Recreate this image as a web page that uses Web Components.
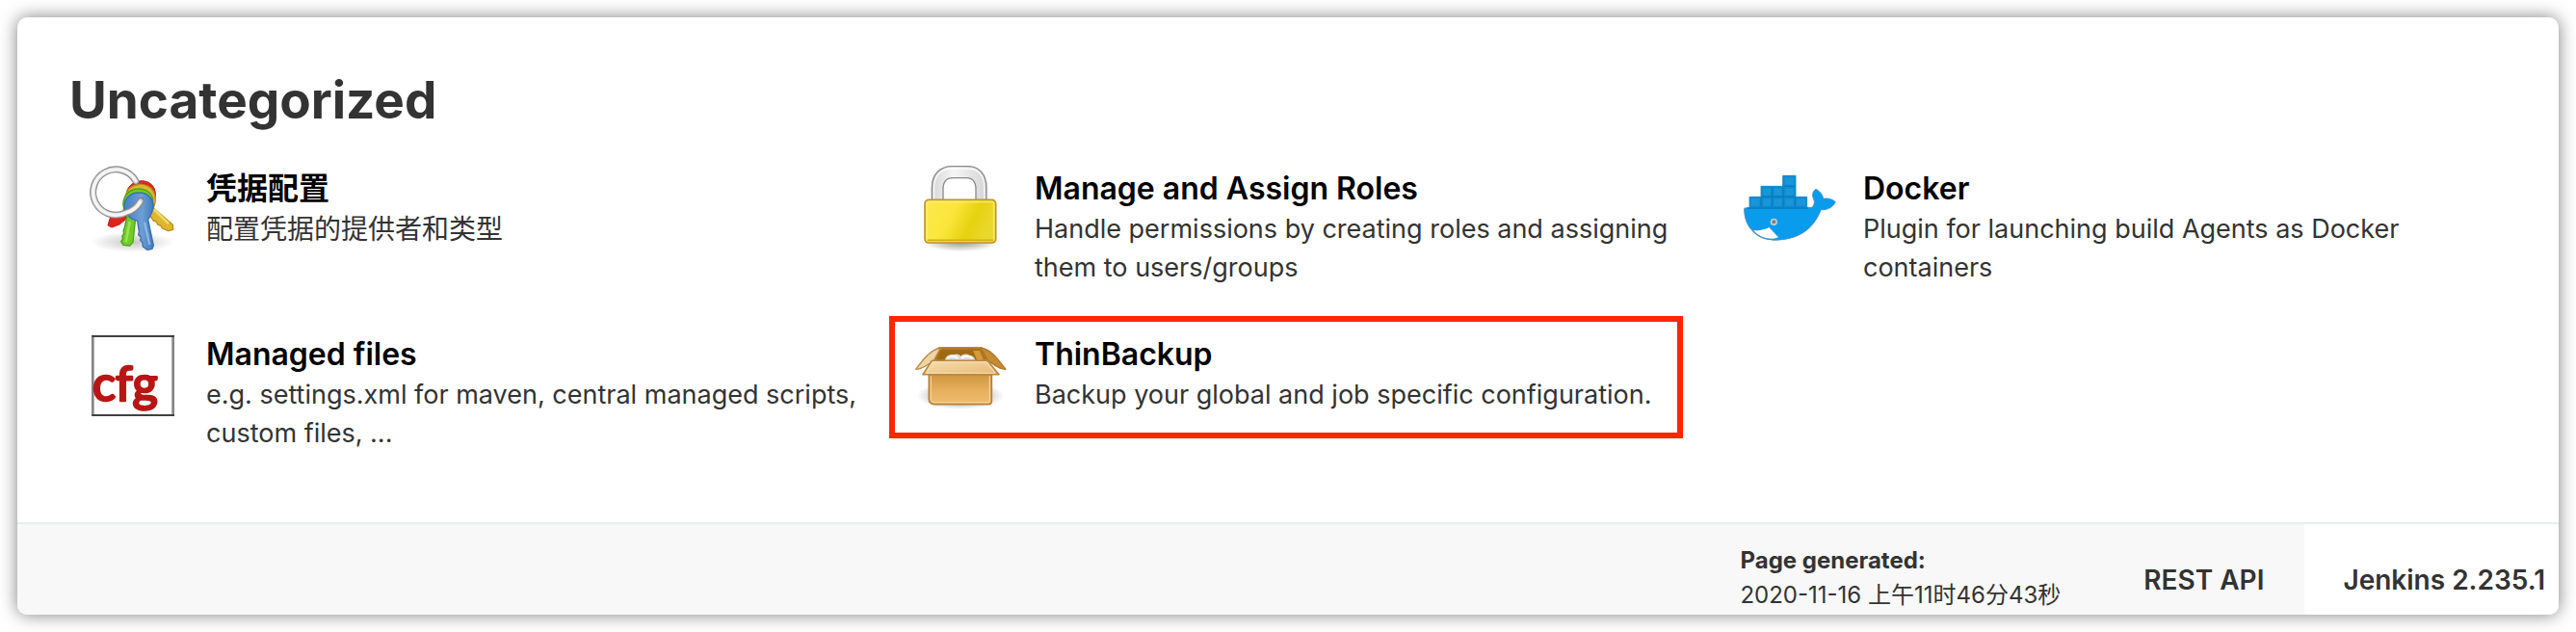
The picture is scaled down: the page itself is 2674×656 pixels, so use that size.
<!DOCTYPE html>
<html lang="zh-CN">
<head>
<meta charset="utf-8">
<title>Manage Jenkins</title>
<style>
  body { margin: 0; padding: 18px; background: #fff; color: #333;
    font-family: Inter, "Noto Sans CJK SC", sans-serif; }
</style>
</head>
<body>
<jenkins-window>
  <manage-section heading="Uncategorized">
    <manage-item href="#credentials" label="凭据配置" lang="zh">
      <svg slot="icon" viewBox="30 18 288 288" aria-hidden="true">
        <defs>
          <radialGradient id="ks"><stop offset="0" stop-color="#000" stop-opacity=".22"/><stop offset="1" stop-color="#000" stop-opacity="0"/></radialGradient>
          <linearGradient id="kb" x1="0" x2="1"><stop offset="0" stop-color="#4580c4"/><stop offset=".6" stop-color="#6d9fd4"/><stop offset="1" stop-color="#4079bd"/></linearGradient>
        </defs>
        <ellipse cx="172" cy="274" rx="130" ry="32" fill="url(#ks)"/>
        <path d="M172 120l-35 68-35 12-6 22 12 6 24-9 44-36z" fill="#e0251d" stroke="#c11a14" stroke-width="3"/>
        <path d="M155 116c12-38 66-44 84-12 10 20 4 40-2 52l-30 8z" fill="#d62b25" stroke="#bd1c1c" stroke-width="3"/>
        <path d="M150 130c12-44 70-46 88-14 10 20 6 38 0 52l60 52 1 15-15 4-19-8-5-9-8-2-5-10-9-3-28-40z" fill="#e0b62c" stroke="#b98f1a" stroke-width="4" stroke-linejoin="round"/>
        <path d="M239 172l46 44" stroke="#edda6a" stroke-width="8"/>
        <path d="M146 170c-10-34 14-62 46-62 26 0 42 16 44 34l-54 58-8 74-10 11-20-2-7-11 6-8-3-8 6-9-2-8 4-10 8-38z" fill="#72cc28" stroke="#4ea31c" stroke-width="4" stroke-linejoin="round"/>
        <path d="M164 210l-12 64" stroke="#9ae44e" stroke-width="8"/>
        <path d="M149 174c-8-32 14-54 44-54 30 0 48 24 44 48-3 18-12 28-16 36l17 80-4 11-15 3-14-10-1-12-7-8 2-9-8-8 2-9-5-34c-24-6-34-18-39-34z" fill="url(#kb)" stroke="#3d6faf" stroke-width="4" stroke-linejoin="round"/>
        <path d="M210 212l16 70" stroke="#8ab7e4" stroke-width="7"/>
        <circle cx="199" cy="144" r="9" fill="#4d5964"/>
        <path d="M183 84A71 71 0 1 0 153 182Q183 174 198 146" fill="none" stroke="#858585" stroke-width="21" stroke-linecap="round"/>
        <path d="M183 84A71 71 0 1 0 153 182Q183 174 198 146" fill="none" stroke="#c9c9c9" stroke-width="15" stroke-linecap="round"/>
        <path d="M183 84A71 71 0 1 0 153 182Q183 174 196 149" fill="none" stroke="#f5f5f5" stroke-width="10" stroke-linecap="round"/>
      </svg>
      配置凭据的提供者和类型
    </manage-item>
    <manage-item href="#roles" label="Manage and Assign Roles">
      <svg slot="icon" viewBox="30 18 288 288" aria-hidden="true">
        <defs>
          <radialGradient id="ls"><stop offset="0" stop-color="#000" stop-opacity=".45"/><stop offset="1" stop-color="#000" stop-opacity="0"/></radialGradient>
          <linearGradient id="lb" x1="0" x2="1" y2=".3"><stop offset="0" stop-color="#fbe94e"/><stop offset=".45" stop-color="#fae63a"/><stop offset=".75" stop-color="#e6d20f"/><stop offset="1" stop-color="#ead72c"/></linearGradient>
          <linearGradient id="lh" x1="0" x2="1"><stop offset="0" stop-color="#d6d6d6"/><stop offset=".4" stop-color="#f6f6f6"/><stop offset="1" stop-color="#d5d5d5"/></linearGradient>
        </defs>
        <ellipse cx="172" cy="272" rx="120" ry="32" fill="url(#ls)"/>
        <path d="M82 146v-42c0-45 30-66 62-66h50c36 0 58 26 58 66v42h-33v-36c0-24-11-36-30-36h-42c-20 0-30 14-30 36v36z" fill="url(#lh)" stroke="#898989" stroke-width="4"/>
        <path d="M89 140v-36c0-40 25-59 55-59h50c32 0 51 21 51 59v36" fill="none" stroke="#fff" stroke-width="4" opacity=".8"/>
        <rect x="60" y="142" width="221" height="134" rx="12" fill="url(#lb)" stroke="#c29324" stroke-width="5"/>
        <rect x="66" y="148" width="209" height="122" rx="8" fill="none" stroke="#f8ed82" stroke-width="5" opacity=".75"/>
        <path d="M68 268h205" stroke="#d0ae1b" stroke-width="5"/>
      </svg>
      Handle permissions by creating roles and assigning them to users/groups
    </manage-item>
    <manage-item href="#docker" label="Docker">
      <svg slot="icon" viewBox="30 18 288 288" aria-hidden="true">
        <path d="M33 168H48V133H84V100H152V67H192V133H227V166H243C251 157 252 148 247 138 242 124 246 116 255 109 268 116 276 126 278 139 293 136 306 140 316 149 307 165 292 174 271 173 250 225 213 262 139 267 84 270 32 238 32 172z" fill="#099cec" stroke="#4c91bf" stroke-width="3"/>
        <path d="M49 133H84V100H152V67H192V133H227V166H49z" fill="#0d8cd1"/>
        <path d="M84 135v30M118 102v63M153 102v63M190 135v30M84 133h106M153 100h38" stroke="#0a78b7" stroke-width="3"/>
        <g fill="#1a96d8"><rect x="54" y="139" width="25" height="22"/><rect x="91" y="139" width="24" height="22"/><rect x="125" y="139" width="24" height="22"/><rect x="160" y="139" width="25" height="22"/><rect x="195" y="139" width="27" height="22"/><rect x="91" y="107" width="24" height="21"/><rect x="125" y="107" width="24" height="21"/><rect x="160" y="107" width="25" height="21"/><rect x="158" y="73" width="28" height="22"/></g>
        <path d="M40 168h190" stroke="#0879ba" stroke-width="4"/>
        <path d="M59 238c20 0 39-3 50-10l29 31c-30 12-62-2-79-21z" fill="#fff"/>
        <path d="M58 238c20 24 50 32 86 27" fill="none" stroke="#448bbc" stroke-width="4"/>
        <circle cx="124" cy="211" r="11" fill="#b7d3df"/><circle cx="124" cy="211" r="6" fill="#877c76"/>
      </svg>
      Plugin for launching build Agents as Docker containers
    </manage-item>
    <manage-item href="#configfiles" label="Managed files">
      <svg slot="icon" viewBox="30 9 288 288" aria-hidden="true">
        <rect x="49" y="41" width="252" height="247" fill="#fff"/>
        <path d="M49 38v253M299 38v253" stroke="#858585" stroke-width="8"/>
        <path d="M46 42h257M46 288h257" stroke="#404040" stroke-width="6"/>
        <text x="48" y="243" font-family="Lato, sans-serif" font-size="151" font-weight="400" fill="#b81616" stroke="#b81616" stroke-width="8" stroke-linejoin="round">cfg</text>
      </svg>
      e.g. settings.xml for maven, central managed scripts, custom files, ...
    </manage-item>
    <manage-item href="#thinbackup" label="ThinBackup" highlighted>
      <svg slot="icon" viewBox="120 54 288 288" aria-hidden="true">
        <defs>
          <radialGradient id="bs"><stop offset="0" stop-color="#000" stop-opacity=".5"/><stop offset="1" stop-color="#000" stop-opacity="0"/></radialGradient>
          <linearGradient id="bf" x2="0" y2="1"><stop offset="0" stop-color="#cf943c"/><stop offset=".5" stop-color="#e5ae5b"/><stop offset="1" stop-color="#edbd72"/></linearGradient>
          <linearGradient id="bt" x2="1" y2="1"><stop offset="0" stop-color="#f5dfb5"/><stop offset="1" stop-color="#e8b970"/></linearGradient>
        </defs>
        <ellipse cx="261" cy="272" rx="136" ry="43" fill="url(#bs)"/>
        <path d="M194 122h132l24 40H178z" fill="#ad7619" stroke="#b98b45" stroke-width="4"/>
        <path d="M200 130h119l12 31H189z" fill="#9f6a0e"/>
        <path d="M300 132h21l12 30h-20z" fill="#d59a3c"/>
        <path d="M213 162c0-12 13-20 26-18 10-4 19-1 23 5 5-6 18-9 27-3 9 0 17 7 18 16z" fill="#dcdcdc"/>
        <path d="M222 154c8-7 22-6 29 0m15 0c8-6 22-6 30 0" fill="none" stroke="#fff" stroke-width="6" stroke-linecap="round"/>
        <path d="M199 123c-31 6-54 35-77 67 16 0 25-7 35-13l20-12z" fill="#eed3a4" stroke="#b98a43" stroke-width="4" stroke-linejoin="round"/>
        <path d="M325 123c33 6 51 34 77 67-16 0-26-7-32-11-9-6-18-12-24-17z" fill="#c68b31" stroke="#aa792e" stroke-width="4" stroke-linejoin="round"/>
        <path d="M163 205h195v84q0 10-10 10H179q-16-2-16-16z" fill="url(#bf)" stroke="#b7803a" stroke-width="5"/>
        <path d="M169 211v71q0 10 12 11h164q7 0 7-8v-74" fill="none" stroke="#f3cf91" stroke-width="4"/>
        <path d="M172 163h173l36 43H144z" fill="url(#bt)" stroke="#b98641" stroke-width="5" stroke-linejoin="round"/>
        <path d="M175 167h166l28 35H155z" fill="none" stroke="#f8e2b8" stroke-width="3"/>
      </svg>
      Backup your global and job specific configuration.
    </manage-item>
  </manage-section>
  <page-footer slot="footer" version="Jenkins 2.235.1">
    <strong slot="label">Page generated:</strong>
    <time datetime="2020-11-16T11:46:43">2020-11-16 上午11时46分43秒</time>
  </page-footer>
</jenkins-window>

<template id="window-template">
  <style>
    :host { display: block; overflow: hidden; border-radius: 10px; background: #fff;
      box-shadow: 0 0 18px rgba(0, 0, 0, .5); }
  </style>
  <main><slot></slot></main>
  <slot name="footer"></slot>
</template>

<template id="section-template">
  <style>
    :host { display: block; padding: 52px 4px 72px 54px; }
    h1 { margin: 0 0 28px; font-size: 53px; line-height: 68px; font-weight: 700; }
    .items { display: grid; grid-template-columns: repeat(3, minmax(0, 1fr)); row-gap: 40px; }
  </style>
  <h1></h1>
  <div class="items"><slot></slot></div>
</template>

<template id="item-template">
  <style>
    :host { display: block; position: relative; --text-size: 27px; }
    :host([lang="zh"]) { --text-size: 28px; }
    :host([highlighted])::after { content: ""; position: absolute; top: -10px; right: 45px; bottom: 15px; left: -9px;
      border: 6px solid #ff2600; pointer-events: none; }
    a { display: flex; gap: 28px; padding: 0 24px 0 18px; color: inherit; text-decoration: none; }
    .icon { flex: none; width: 96px; height: 96px; }
    ::slotted(svg) { display: block; width: 100%; height: 100%; }
    dl { flex: 1; min-width: 0; margin: 0; padding-top: 8px; }
    dt { color: #000; font-size: 32px; line-height: 44px; font-weight: 600; }
    dd { margin: 0; font-size: var(--text-size); line-height: 40px; }
  </style>
  <a>
    <div class="icon"><slot name="icon"></slot></div>
    <dl><dt></dt><dd><slot></slot></dd></dl>
  </a>
</template>

<template id="footer-template">
  <style>
    :host { display: flex; justify-content: flex-end; border-top: 2px solid #e9eef2; background: #f8f8f8; }
    .generated { padding-top: 20px; font-size: 24px; line-height: 36px; }
    .generated div { white-space: nowrap; }
    ::slotted(strong) { font-weight: 700; }
    a { box-sizing: border-box; padding-top: 40px; color: inherit; font-size: 28px; line-height: 36px;
      font-weight: 600; text-decoration: none; white-space: nowrap; }
    .api { margin-left: 86px; padding-right: 42px; }
    .version { padding-right: 14px; padding-left: 40px; padding-bottom: 18px; background: #fff; }
  </style>
  <div class="generated">
    <div><slot name="label"></slot></div>
    <div><slot></slot></div>
  </div>
  <a class="api" href="#api">REST API</a>
  <a class="version" href="#about"></a>
</template>

<script>
  class TemplateElement extends HTMLElement {
    constructor() {
      super();
      const template = document.getElementById(this.constructor.template);
      this.attachShadow({ mode: "open" }).append(template.content.cloneNode(true));
    }
  }

  class JenkinsWindow extends TemplateElement {
    static template = "window-template";
  }

  class ManageSection extends TemplateElement {
    static template = "section-template";
    connectedCallback() {
      this.shadowRoot.querySelector("h1").textContent = this.getAttribute("heading");
    }
  }

  class ManageItem extends TemplateElement {
    static template = "item-template";
    connectedCallback() {
      this.shadowRoot.querySelector("a").href = this.getAttribute("href");
      this.shadowRoot.querySelector("dt").textContent = this.getAttribute("label");
    }
  }

  class PageFooter extends TemplateElement {
    static template = "footer-template";
    connectedCallback() {
      this.shadowRoot.querySelector(".version").textContent = this.getAttribute("version");
    }
  }

  customElements.define("jenkins-window", JenkinsWindow);
  customElements.define("manage-section", ManageSection);
  customElements.define("manage-item", ManageItem);
  customElements.define("page-footer", PageFooter);
</script>
</body>
</html>
